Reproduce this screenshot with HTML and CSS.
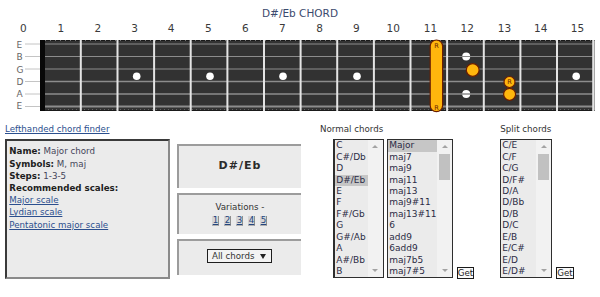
FILE: index.html
```html
<!DOCTYPE html>
<html>
<head>
<meta charset="utf-8">
<link rel="stylesheet" href="styles.css">
</head>
<body>
<div class="title">D#/Eb CHORD</div>
<svg class="board" width="600" height="102" viewBox="0 20 600 102" xmlns="http://www.w3.org/2000/svg">
  <g class="fretnum" font-family="DejaVu Sans, sans-serif" font-size="10.5" fill="#3a3a3a" text-anchor="middle">
    <text x="23.3" y="32.3">0</text><text x="60.8" y="32.3">1</text><text x="97.8" y="32.3">2</text>
    <text x="134.5" y="32.3">3</text><text x="171.2" y="32.3">4</text><text x="208.3" y="32.3">5</text>
    <text x="245.3" y="32.3">6</text><text x="282.3" y="32.3">7</text><text x="319.5" y="32.3">8</text>
    <text x="356.3" y="32.3">9</text><text x="393.2" y="32.3">10</text><text x="430.5" y="32.3">11</text>
    <text x="467.2" y="32.3">12</text><text x="504.5" y="32.3">13</text><text x="540.8" y="32.3">14</text>
    <text x="577.5" y="32.3">15</text>
  </g>
  <g stroke="#c4c4c4" stroke-width="1">
    <line x1="25" y1="44" x2="40" y2="44"/><line x1="25" y1="56.5" x2="40" y2="56.5"/>
    <line x1="25" y1="69" x2="40" y2="69"/><line x1="25" y1="81.5" x2="40" y2="81.5"/>
    <line x1="25" y1="94" x2="40" y2="94"/><line x1="25" y1="106.5" x2="40" y2="106.5"/>
  </g>
  <g font-family="DejaVu Sans, sans-serif" font-size="9" fill="#666">
    <text x="16.5" y="47.6">E</text><text x="16.5" y="60.1">B</text><text x="16.5" y="72.6">G</text>
    <text x="16.5" y="85.1">D</text><text x="16.5" y="97.1">A</text><text x="16.5" y="109.1">E</text>
  </g>
  <rect x="40" y="40" width="554.5" height="71" fill="#323232"/>
  <line x1="40" y1="40.5" x2="594.5" y2="40.5" stroke="#1a1a1a"/>
  <line x1="40" y1="40.5" x2="594.5" y2="40.5" stroke="#777" stroke-dasharray="1 4"/>
  <line x1="40" y1="110.5" x2="594.5" y2="110.5" stroke="#1a1a1a"/>
  <line x1="40" y1="109.5" x2="594.5" y2="109.5" stroke="#666" stroke-dasharray="1 3"/>
  <rect x="40" y="40" width="5" height="71" fill="#080808"/>
  <g fill="#fff">
    <circle cx="136.7" cy="76.2" r="3.8"/><circle cx="210" cy="76.2" r="3.8"/>
    <circle cx="283" cy="76.2" r="3.8"/><circle cx="357" cy="76.2" r="3.8"/>
    <circle cx="466.2" cy="56.5" r="4"/><circle cx="466.2" cy="94" r="4"/>
    <circle cx="576.2" cy="76.2" r="3.8"/>
  </g>
  <g stroke="#8c8c8c">
    <line x1="45" y1="44" x2="594.5" y2="44" stroke-width="1"/>
    <line x1="45" y1="56.5" x2="594.5" y2="56.5" stroke-width="1"/>
    <line x1="45" y1="69" x2="594.5" y2="69" stroke-width="1.2"/>
    <line x1="45" y1="81.5" x2="594.5" y2="81.5" stroke-width="1.4"/>
    <line x1="45" y1="94" x2="594.5" y2="94" stroke-width="1.7"/>
    <line x1="45" y1="106.5" x2="594.5" y2="106.5" stroke-width="2"/>
  </g>
  <g stroke="#e4e4e4" stroke-width="2">
    <line x1="80.8" y1="40" x2="80.8" y2="111"/><line x1="117.5" y1="40" x2="117.5" y2="111"/>
    <line x1="154.1" y1="40" x2="154.1" y2="111"/><line x1="190.7" y1="40" x2="190.7" y2="111"/>
    <line x1="227.4" y1="40" x2="227.4" y2="111"/><line x1="264" y1="40" x2="264" y2="111"/>
    <line x1="300.6" y1="40" x2="300.6" y2="111"/><line x1="337.2" y1="40" x2="337.2" y2="111"/>
    <line x1="373.9" y1="40" x2="373.9" y2="111"/><line x1="410.5" y1="40" x2="410.5" y2="111"/>
    <line x1="447.1" y1="40" x2="447.1" y2="111"/><line x1="483.8" y1="40" x2="483.8" y2="111"/>
    <line x1="520.4" y1="40" x2="520.4" y2="111"/><line x1="557" y1="40" x2="557" y2="111"/>
    <line x1="593.2" y1="40" x2="593.2" y2="111"/>
  </g>
  <g fill="#ffb60d" stroke="#6b1e00" stroke-width="1.2">
    <rect x="430.2" y="40" width="12.4" height="71.7" rx="6.2"/>
    <circle cx="472.7" cy="70" r="6.4"/>
    <circle cx="509.5" cy="82" r="5.5"/>
    <circle cx="509.6" cy="94.3" r="6"/>
  </g>
  <g font-family="DejaVu Sans, sans-serif" font-size="6.5" fill="#6b1e00" text-anchor="middle">
    <text x="436.4" y="48.4">R</text>
    <text x="436.4" y="109.6">R</text>
    <text x="509.5" y="84.4">R</text>
  </g>
</svg>
<div class="lower">
  <div class="left">
    <a class="lefty" href="#">Lefthanded chord finder</a>
    <div class="info">
      <div><b>Name:</b> Major chord</div>
      <div><b>Symbols:</b> M, maj</div>
      <div><b>Steps:</b> 1-3-5</div>
      <div><b>Recommended scales:</b></div>
      <a href="#">Major scale</a>
      <a href="#">Lydian scale</a>
      <a href="#">Pentatonic major scale</a>
    </div>
  </div>
  <div class="mid">
    <div class="mbox chordname">D#/Eb</div>
    <div class="mbox vars">
      <div>Variations -</div>
      <div class="nums"><a href="#">1</a><a href="#">2</a><a href="#">3</a><a href="#">4</a><a href="#">5</a></div>
    </div>
    <div class="mbox filter">
      <span class="dropdown">All chords<svg width="6" height="5" viewBox="0 0 6 5"><path d="M0 0H6L3 5Z" fill="#222"/></svg></span>
    </div>
  </div>
  <div class="group normal">
    <div class="label">Normal chords</div>
    <div class="lists">
      <div class="lb lb1">
        <div class="opts">
          <div class="opt">C</div><div class="opt">C#/Db</div><div class="opt">D</div>
          <div class="opt on">D#/Eb</div><div class="opt">E</div><div class="opt">F</div>
          <div class="opt">F#/Gb</div><div class="opt">G</div><div class="opt">G#/Ab</div>
          <div class="opt">A</div><div class="opt">A#/Bb</div><div class="opt">B</div>
        </div>
        <div class="sb"><div class="up"></div><div class="fill"></div><div class="dn"></div></div>
      </div>
      <div class="lb lb2">
        <div class="opts">
          <div class="opt on">Major</div><div class="opt">maj7</div><div class="opt">maj9</div>
          <div class="opt">maj11</div><div class="opt">maj13</div><div class="opt">maj9#11</div>
          <div class="opt">maj13#11</div><div class="opt">6</div><div class="opt">add9</div>
          <div class="opt">6add9</div><div class="opt">maj7b5</div><div class="opt">maj7#5</div>
        </div>
        <div class="sb"><div class="up"></div><div class="thumb"></div><div class="fill"></div><div class="dn"></div></div>
      </div>
      <div class="get">Get</div>
    </div>
  </div>
  <div class="group split">
    <div class="label">Split chords</div>
    <div class="lists">
      <div class="lb lb3">
        <div class="opts">
          <div class="opt">C/E</div><div class="opt">C/F</div><div class="opt">C/G</div>
          <div class="opt">D/F#</div><div class="opt">D/A</div><div class="opt">D/Bb</div>
          <div class="opt">D/B</div><div class="opt">D/C</div><div class="opt">E/B</div>
          <div class="opt">E/C#</div><div class="opt">E/D</div><div class="opt">E/D#</div>
        </div>
        <div class="sb"><div class="up"></div><div class="thumb"></div><div class="fill"></div><div class="dn"></div></div>
      </div>
      <div class="get">Get</div>
    </div>
  </div>
</div>
</body>
</html>
```
FILE: styles.css
```css
* { box-sizing: border-box; }
body {
  margin: 0;
  width: 600px;
  height: 297px;
  overflow: hidden;
  background: #fff;
  font-family: "DejaVu Sans", Verdana, sans-serif;
  font-size: 8.7px;
  color: #222;
}
a { color: #2b4f8e; text-decoration: underline; }
.title {
  height: 20px;
  padding-top: 6px;
  line-height: 14px;
  text-align: center;
  font-size: 10.5px;
  color: #3b4a6e;
}
.board { display: block; }
.lower {
  display: flex;
  align-items: flex-start;
  padding-left: 5px;
}
.left { width: 165px; }
.lefty {
  display: block;
  height: 17.3px;
  line-height: 15.3px;
}
.info {
  height: 139.7px;
  border: 2px solid;
  border-color: #3a3a3a #8a8a8a #8a8a8a #3a3a3a;
  background: #ebebeb;
  padding: 4px 2.3px;
  line-height: 12.2px;
  color: #45455a;
}
.info b { color: #1e1e1e; }
.info a { display: block; }
.mid {
  margin-left: 7.3px;
  margin-top: 22px;
  width: 123.4px;
  display: flex;
  flex-direction: column;
}
.mbox {
  background: #ebebeb;
  border-top: 2px solid #9c9c9c;
  border-left: 2px solid #9c9c9c;
  text-align: center;
}
.chordname {
  height: 44.3px;
  line-height: 40.3px;
  font-weight: bold;
  font-size: 11px;
  letter-spacing: 1px;
  color: #2a2a2a;
}
.vars {
  height: 41px;
  margin-top: 5px;
  padding-top: 6px;
  line-height: 12.4px;
  color: #333;
}
.nums {
  display: flex;
  justify-content: center;
  gap: 5px;
  margin-top: 2px;
}
.nums a {
  display: block;
  width: 7px;
  height: 10.3px;
  line-height: 9.3px;
  background: #d6d6d6;
  border-right: 1px solid #8e8e8e;
  border-bottom: 1px solid #b0b0b0;
  text-align: center;
  color: #24467f;
}
.filter {
  height: 36px;
  margin-top: 4.7px;
  padding-top: 8.3px;
}
.dropdown {
  display: inline-flex;
  align-items: center;
  justify-content: space-between;
  width: 65px;
  height: 14px;
  border: 1px solid #1e1e1e;
  background: #f3f3f3;
  padding: 0 5.5px 0 3.5px;
  color: #333;
}
.group { display: flex; flex-direction: column; }
.normal { margin-left: 19.3px; width: 180.3px; }
.label {
  height: 17.3px;
  line-height: 15.3px;
  color: #333;
}
.lists {
  display: flex;
  align-items: flex-end;
}
.normal .lists { padding-left: 13.3px; }
.lb {
  height: 138.4px;
  border: 1px solid #2e2e2e;
  background: #ebebeb;
  display: flex;
  overflow: hidden;
}
.lb1 { width: 50.7px; border-left-width: 2px; }
.lb2 { width: 66px; margin-left: 3.3px; }
.lb3 { width: 52px; }
.opts { flex: 1; min-width: 0; }
.opt {
  height: 11.45px;
  line-height: 11.45px;
  padding-left: 1px;
  font-size: 9px;
  color: #2b2b45;
  white-space: nowrap;
}
.opt.on { background: #c6c6c6; }
.sb {
  width: 15.3px;
  background: #f2f2f2;
  display: flex;
  flex-direction: column;
  align-items: center;
  padding: 4.7px 0 5px;
}
.up {
  width: 0;
  height: 0;
  border-left: 3px solid transparent;
  border-right: 3px solid transparent;
  border-bottom: 3.5px solid #a3a3a3;
}
.dn {
  width: 0;
  height: 0;
  border-left: 3px solid transparent;
  border-right: 3px solid transparent;
  border-top: 3.5px solid #a3a3a3;
}
.thumb {
  margin-top: 6.5px;
  width: 11px;
  height: 26px;
  background: #c1c1c1;
}
.fill { flex: 1; }
.get {
  width: 17.3px;
  height: 12.6px;
  border: 1px solid #1a1a1a;
  background: #fafafa;
  margin-left: 3.4px;
  margin-bottom: -1.6px;
  font-size: 8.7px;
  line-height: 10.6px;
  text-align: center;
  color: #222;
}
.split .get { margin-left: 4px; }
```
